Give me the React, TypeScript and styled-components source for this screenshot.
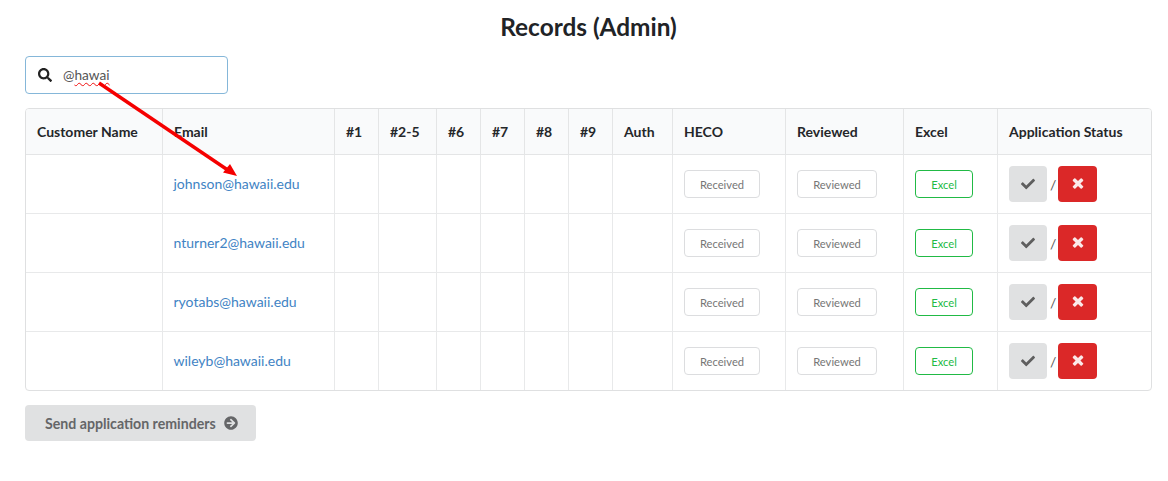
import React from "react";
import styled, { createGlobalStyle } from "styled-components";
import { FaSearch, FaCheck, FaArrowCircleRight } from "react-icons/fa";

const GlobalStyle = createGlobalStyle`
  html, body {
    margin: 0;
    padding: 0;
    background: #fff;
    font-family: Lato, "Helvetica Neue", Arial, sans-serif;
    color: rgba(0, 0, 0, 0.87);
  }
`;

const Page = styled.div`
  position: relative;
  width: 1168px;
  height: 481px;
  padding: 12px 16px 0 25px;
  box-sizing: border-box;
  overflow: hidden;
`;

const Title = styled.h2`
  margin: 0 0 15px;
  font-size: 24.4px;
  line-height: 29px;
  font-weight: 700;
  text-align: center;
  color: #212326;
`;

const SearchBox = styled.div`
  display: flex;
  align-items: center;
  width: 203px;
  height: 38px;
  box-sizing: border-box;
  padding-left: 12px;
  border: 1px solid #85b7d9;
  border-radius: 4px;
  margin-bottom: 14px;
  color: #222;
`;

const Query = styled.span`
  margin-left: 11px;
  padding-bottom: 2px;
  font-size: 13.7px;
  color: #555;
  & > u {
    text-decoration: underline wavy #f01010 1px;
    text-underline-offset: 2px;
  }
`;

const TableWrap = styled.div`
  width: 1127px;
  border: 1px solid #dfe0e1;
  border-radius: 4px;
  box-sizing: border-box;
  overflow: hidden;
  margin-bottom: 14px;
`;

const Table = styled.table`
  width: 1125px;
  table-layout: fixed;
  border-collapse: separate;
  border-spacing: 0;
  font-size: 14px;
`;

const Head = styled.th`
  height: 46px;
  padding: 0 0 0 11px;
  box-sizing: border-box;
  background: #f9fafb;
  border-bottom: 1px solid #e4e5e6;
  border-left: 1px solid #e4e5e6;
  text-align: left;
  font-weight: 700;
  font-size: 14px;
  color: #25272a;
  white-space: nowrap;
  &:first-child {
    border-left: none;
  }
`;

const Cell = styled.td`
  height: 59px;
  padding: 0 0 0 11px;
  box-sizing: border-box;
  border-bottom: 1px solid #e8e9ea;
  border-left: 1px solid #e8e9ea;
  &:first-child {
    border-left: none;
  }
  tr:last-child > & {
    height: 58px;
    border-bottom: none;
  }
`;

const EmailCell = styled(Cell)`
  padding: 0 0 2px 10.5px;
`;

const EmailLink = styled.a`
  color: #4183c4;
  font-size: 14px;
  text-decoration: none;
`;

const Tag = styled.span<{ $green?: boolean; $w: number }>`
  display: inline-flex;
  align-items: center;
  justify-content: center;
  width: ${(p) => p.$w}px;
  height: 28px;
  box-sizing: border-box;
  border-radius: 4px;
  border: 1px solid ${(p) => (p.$green ? "#21ba45" : "#dcdddf")};
  color: ${(p) => (p.$green ? "#21ba45" : "#767676")};
  font-size: 11.2px;
  vertical-align: middle;
`;

const StatusGroup = styled.div`
  display: flex;
  align-items: center;
`;

const Slash = styled.span`
  margin: 0 4px 0 3px;
  width: 4px;
  font-size: 14px;
  color: #5a5a5a;
`;

const SquareButton = styled.button<{ $danger?: boolean }>`
  display: flex;
  align-items: center;
  justify-content: center;
  width: ${(p) => (p.$danger ? 39 : 38)}px;
  height: 36px;
  padding: 0;
  border: none;
  border-radius: 4px;
  background: ${(p) => (p.$danger ? "#db2828" : "#e0e1e2")};
  color: ${(p) => (p.$danger ? "#fbe9e9" : "#5f5f5f")};
  font-size: 14px;
`;

const SendButton = styled.button`
  display: flex;
  align-items: center;
  width: 231px;
  height: 36px;
  padding: 0 0 0 20px;
  box-sizing: border-box;
  border: none;
  border-radius: 4px;
  background: #e0e1e2;
  color: #656668;
  font-family: inherit;
  font-size: 14.15px;
  font-weight: 700;
  & > svg {
    margin-left: 8px;
    font-size: 14px;
  }
`;

const Arrow = styled.svg`
  position: absolute;
  left: 0;
  top: 0;
  pointer-events: none;
`;

// the heavier rounded cross of the reference, wider than react-icons' FaTimes
const CrossIcon = () => (
  <svg width="14" height="16" viewBox="0 0 1408 1792" fill="currentColor">
    <path d="M1298 1202q0 40-28 68l-136 136q-28 28-68 28t-68-28l-294-294-294 294q-28 28-68 28t-68-28l-136-136q-28-28-28-68t28-68l294-294-294-294q-28-28-28-68t28-68l136-136q28-28 68-28t68 28l294 294 294-294q28-28 68-28t68 28l136 136q28 28 28 68t-28 68l-294 294 294 294q28 28 28 68z" />
  </svg>
);

const columns: { label: string; width: number }[] = [
  { label: "Customer Name", width: 136 },
  { label: "Email", width: 172 },
  { label: "#1", width: 44 },
  { label: "#2-5", width: 58 },
  { label: "#6", width: 44 },
  { label: "#7", width: 44 },
  { label: "#8", width: 44 },
  { label: "#9", width: 44 },
  { label: "Auth", width: 60 },
  { label: "HECO", width: 113 },
  { label: "Reviewed", width: 118 },
  { label: "Excel", width: 94 },
  { label: "Application Status", width: 154 },
];

const emails = [
  "johnson@hawaii.edu",
  "nturner2@hawaii.edu",
  "ryotabs@hawaii.edu",
  "wileyb@hawaii.edu",
];

export default function App() {
  return (
    <Page>
      <GlobalStyle />
      <Title>Records (Admin)</Title>
      <SearchBox>
        <FaSearch size={14} />
        <Query>
          @<u>hawai</u>
        </Query>
      </SearchBox>
      <TableWrap>
        <Table>
          <colgroup>
            {columns.map((c) => (
              <col key={c.label} width={c.width} />
            ))}
          </colgroup>
          <thead>
            <tr>
              {columns.map((c) => (
                <Head key={c.label}>{c.label}</Head>
              ))}
            </tr>
          </thead>
          <tbody>
            {emails.map((email) => (
              <tr key={email}>
                <Cell />
                <EmailCell>
                  <EmailLink href="#">{email}</EmailLink>
                </EmailCell>
                <Cell />
                <Cell />
                <Cell />
                <Cell />
                <Cell />
                <Cell />
                <Cell />
                <Cell>
                  <Tag $w={76}>Received</Tag>
                </Cell>
                <Cell>
                  <Tag $w={80}>Reviewed</Tag>
                </Cell>
                <Cell>
                  <Tag $w={58} $green>
                    Excel
                  </Tag>
                </Cell>
                <Cell>
                  <StatusGroup>
                    <SquareButton>
                      <FaCheck />
                    </SquareButton>
                    <Slash>/</Slash>
                    <SquareButton $danger>
                      <CrossIcon />
                    </SquareButton>
                  </StatusGroup>
                </Cell>
              </tr>
            ))}
          </tbody>
        </Table>
      </TableWrap>
      <SendButton>
        Send application reminders
        <FaArrowCircleRight />
      </SendButton>
      <Arrow width="1168" height="481" viewBox="0 0 1168 481">
        <line x1="99" y1="83" x2="227" y2="169.5" stroke="#f50000" strokeWidth="3.4" />
        <polygon points="237,176 223,172.5 230,164" fill="#f50000" />
      </Arrow>
    </Page>
  );
}
